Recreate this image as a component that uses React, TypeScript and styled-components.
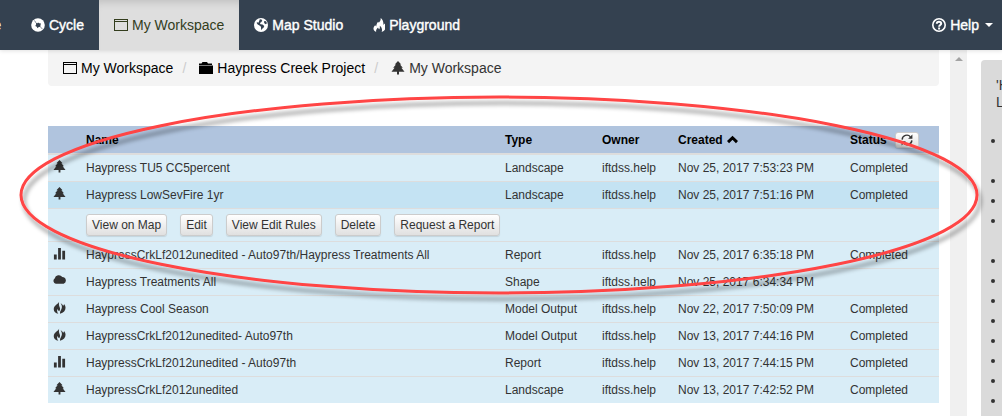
import React from "react";
import styled, { createGlobalStyle, css } from "styled-components";

const GlobalStyle = createGlobalStyle`
  *, *::before, *::after { box-sizing: border-box; }
  body {
    margin: 0;
    background: #fff;
    color: #333;
    font-family: "Liberation Sans", Arial, sans-serif;
    font-size: 14px;
    line-height: 20px;
    overflow: hidden;
  }
`;

type IconName =
  | "window" | "folder" | "tree" | "cycle" | "globe" | "flame" | "help"
  | "bars" | "cloud" | "fire" | "refresh" | "chevron";

const shapes: Record<IconName, React.ReactNode> = {
  window: (
    <path fillRule="evenodd" d="M0 1h14v12H0zM1 4v8h12V4zM1 2v1h12V2z" />
  ),
  folder: <path d="M0 4V2.500h2.500L3.500 1H8l1 1.500h4V4zM0 4.500h14V13H0z" />,
  tree: (
    <path d="M7 0l3.300 3.500H9L11.800 6.700H10.400L13.500 10.700H8V13.500H6v-2.800H.5l3.100-4H2.200L5 3.500H3.700z" />
  ),
  cycle: (
    <>
      <circle cx="7" cy="7" r="6.800" />
      <path fill="#344150" d="M7 4.500l1.300.7 1.700.2-.6 1.800.2 1.600-1.800.3-1.300 1.100-.7-1.400L4.300 8l.8-1.400L5 5l1.500.3z" />
      <path stroke="#344150" strokeWidth=".6" fill="none" d="M5 4.900L3.500 2.500M9.500 9l2 2.200" />
    </>
  ),
  globe: (
    <>
      <circle cx="7" cy="7" r="7" />
      <path fill="#344150" d="M5.800 1.200l1.700.3.8 1.200-1.200 1.500-1.200.8.6 1.300 2 .2 1.800 1.600-.8 1.700-1.300 1-.6 1.500-.6-1.900V8.800L5.500 7.400 3.700 6.600 2.500 4.800l1.200-.5.8.5.6-1.500zM10.200 3l1.800.3 1 2-1.400 1-1.500-1.400z" />
    </>
  ),
  flame: (
    <path d="M7.600 0c.4 2.300-.6 3.300-1.700 4.700L5.100 3.800C3.900 5.200 3.200 7 3.300 8.600L2.200 7.200C-.3 9.500-.2 12.700 3.200 14c-.5-2 .5-3.200 1.900-4.600.2 1 .6 1.400 1.200 1.800.7-1.200.7-2.200.4-3.400 1.900 1.300 3 3.900 1.900 6.200 4.200-1.300 5.300-5.200 3.100-8.600-.3.700-.8 1.100-1.400 1.400C10.700 4.400 9.900 1.500 7.600 0z" />
  ),
  help: (
    <>
      <circle cx="7" cy="7" r="6.200" fill="none" stroke="currentColor" strokeWidth="1.600" />
      <path fill="none" stroke="currentColor" strokeWidth="2" d="M4.800 5.700c0-2.700 4.400-2.600 4.400-.1C9.200 7 7.100 7 7.100 8.700" />
      <path d="M6.100 9.500h2v2h-2z" />
    </>
  ),
  bars: <path d="M1 8h3v5.500H1zM5.500 1h3v12.500h-3zM10 4h3v9.500h-3z" />,
  cloud: (
    <path d="M3 10.500A3.200 3.200 0 0 1 1.800 4.800 4.600 4.600 0 0 1 10 3.200 3.800 3.800 0 0 1 11.500 10.500z" />
  ),
  fire: (
    <>
      <path d="M6.800 0C6.800 2.800.8 4.600.8 8.800c0 2.600 2 4.300 5 4.900C4 11.500 4.200 9.800 5 8.500c.3 1.200.9 2 1.700 2.500C9.600 7.600 4.900 6.200 6.800 0z" />
      <path d="M8.200 2.500c2.300 3 1.400 6-.4 8.700-.3 1-.2 1.800-.2 2.500 5.800-1 7.500-6.800 4.300-10.500 0 1-.4 1.500-1 2-.5-1.200-1.500-2.200-2.700-2.700z" />
    </>
  ),
  refresh: (
    <>
      <path fill="none" stroke="currentColor" strokeWidth="1.600" d="M1.300 6.500A5.500 5.500 0 0 1 11 3.400M12.700 7.500A5.500 5.500 0 0 1 3 10.600" />
      <path d="M13.300.5v5H8.300zM.7 13.500v-5h5z" />
    </>
  ),
  chevron: (
    <path fill="none" stroke="currentColor" strokeWidth="3.800" d="M1.300 10.300L7 4.800l5.700 5.500" />
  ),
};

const Svg = styled.svg<{ $size: number; $narrow: boolean }>`
  width: ${(p) => (p.$narrow ? p.$size - 2 : p.$size)}px;
  height: ${(p) => p.$size}px;
  flex: none;
  fill: currentColor;
`;

const Icon = ({ name, size = 14 }: { name: IconName; size?: number }) => {
  const narrow = name === "flame";
  return (
    <Svg $size={size} $narrow={narrow} viewBox={narrow ? "0 0 12 14" : "0 0 14 14"} aria-hidden="true">
      {shapes[name]}
    </Svg>
  );
};

const Navbar = styled.nav`
  position: relative;
  z-index: 1;
  display: flex;
  height: 50px;
  background: #344150;
  box-shadow: 0 1px 4px rgba(0, 0, 0, 0.12);
`;

const NavLink = styled.a<{ $active?: boolean }>`
  display: flex;
  align-items: center;
  gap: 4px;
  padding: 0 15px;
  color: #fff;
  text-decoration: none;
  white-space: nowrap;
  -webkit-text-stroke: 0.4px currentColor;
  ${(p) =>
    p.$active &&
    css`
      color: #333d1d;
      background: #dedede;
      box-shadow: inset 0 8px 9px -6px rgba(0, 0, 0, 0.15);
      -webkit-text-stroke: 0;
    `}
`;

const ClippedLink = styled(NavLink)`
  width: 16px;
  padding: 0 15px 0 0;
  justify-content: flex-end;
  overflow: hidden;
`;

const NavEnd = styled.div`
  display: flex;
  margin-left: auto;
  margin-right: -6px;
`;

const Caret = styled.span`
  margin-left: 2px;
  border: 4px solid transparent;
  border-top-color: currentColor;
  border-bottom: 0;
`;

const Body = styled.div`
  display: flex;
  align-items: stretch;
  min-height: calc(100vh - 50px);
`;

const Main = styled.main`
  flex: 1;
  min-width: 0;
  padding: 0 11px 12px 48px;
`;

const Breadcrumb = styled.ol`
  display: flex;
  align-items: center;
  height: 36px;
  margin: 0 0 40px;
  padding: 0 15px;
  list-style: none;
  background: #f4f4f4;
  border-radius: 0 0 4px 4px;
`;

const Crumb = styled.li`
  display: flex;
  align-items: center;
  gap: 4px;
  & + &::before {
    content: "/";
    width: 22px;
    text-align: center;
    color: #ccc;
  }
`;

const CrumbLink = styled.a<{ $current?: boolean }>`
  display: flex;
  align-items: center;
  gap: 4px;
  color: ${(p) => (p.$current ? "#333" : "#000")};
  text-decoration: none;
`;

const Table = styled.table`
  width: 100%;
  table-layout: fixed;
  border-spacing: 0;
  font-size: 12px;
  line-height: 16px;
  tbody > tr + tr > td {
    border-top: 1px solid #ddd;
  }
`;

const Col = styled.col<{ $w?: number }>`
  width: ${(p) => (p.$w ? `${p.$w}px` : "auto")};
`;

const Th = styled.th`
  height: 29px;
  padding: 0 5px;
  text-align: left;
  color: #000;
  background: #b0c4de;
  border-bottom: 2px solid #ddd;
  white-space: nowrap;
`;

const Heading = styled.span`
  display: flex;
  align-items: center;
  gap: 4px;
`;

const StatusHeading = styled(Heading)`
  gap: 8px;
`;

const Row = styled.tr<{ $selected?: boolean }>`
  background: ${(p) => (p.$selected ? "#c4e3f3" : "#d9edf7")};
`;

const Td = styled.td`
  padding: 5px;
  white-space: nowrap;
`;

const IconCell = styled(Td)`
  vertical-align: top;
  & > svg {
    display: block;
  }
`;

const Actions = styled.div`
  display: flex;
  gap: 13px;
`;

const Button = styled.button`
  height: 22px;
  padding: 0 5px;
  font: inherit;
  color: #333;
  background: linear-gradient(#fff, #e0e0e0);
  border: 1px solid #ccc;
  border-radius: 3px;
  box-shadow: 0 1px 1px rgba(0, 0, 0, 0.1);
`;

const RefreshButton = styled(Button)`
  display: flex;
  align-items: center;
  height: 16px;
`;

const ScrollTrack = styled.div`
  flex: none;
  display: flex;
  justify-content: center;
  align-items: flex-start;
  width: 17px;
  padding-top: 7px;
  background: #f0f0f0;
`;

const ScrollArrow = styled.span`
  border: 4px solid transparent;
  border-top: 0;
  border-bottom-color: #a3a3a3;
`;

const HelpPanel = styled.aside`
  flex: none;
  width: 21px;
  margin: 10px 0 0 14px;
  padding: 17px 0 0 15px;
  overflow: hidden;
  background: #dadada;
  border-radius: 4px 0 0 0;
`;

const HelpText = styled.p`
  margin: 0 0 20px;
  line-height: 17px;
`;

const HelpList = styled.ul`
  margin: 0;
  padding: 0;
  list-style: none;
`;

const Bullet = styled.li<{ $tall?: boolean }>`
  height: ${(p) => (p.$tall ? 40 : 20)}px;
  padding: 8px 0 0 7px;
  margin-left: -12px;
  &:last-child {
    height: 12px;
  }
  &::before {
    content: "";
    display: block;
    width: 4px;
    height: 4px;
    border-radius: 50%;
    background: #333;
  }
`;

const Callout = styled.svg`
  position: absolute;
  z-index: 2;
  top: 84px;
  left: 8px;
  width: calc(100% - 16px);
  height: 226px;
  pointer-events: none;
  overflow: visible;
`;

const Page = styled.div`
  position: relative;
`;

interface Item {
  icon: IconName;
  name: string;
  type: string;
  created: string;
  status: string;
  selected?: boolean;
}

const items: Item[] = [
  { icon: "tree", name: "Haypress TU5 CC5percent", type: "Landscape", created: "Nov 25, 2017 7:53:23 PM", status: "Completed" },
  { icon: "tree", name: "Haypress LowSevFire 1yr", type: "Landscape", created: "Nov 25, 2017 7:51:16 PM", status: "Completed", selected: true },
  { icon: "bars", name: "HaypressCrkLf2012unedited - Auto97th/Haypress Treatments All", type: "Report", created: "Nov 25, 2017 6:35:18 PM", status: "Completed" },
  { icon: "cloud", name: "Haypress Treatments All", type: "Shape", created: "Nov 25, 2017 6:34:34 PM", status: "" },
  { icon: "fire", name: "Haypress Cool Season", type: "Model Output", created: "Nov 22, 2017 7:50:09 PM", status: "Completed" },
  { icon: "fire", name: "HaypressCrkLf2012unedited- Auto97th", type: "Model Output", created: "Nov 13, 2017 7:44:16 PM", status: "Completed" },
  { icon: "bars", name: "HaypressCrkLf2012unedited - Auto97th", type: "Report", created: "Nov 13, 2017 7:44:15 PM", status: "Completed" },
  { icon: "tree", name: "HaypressCrkLf2012unedited", type: "Landscape", created: "Nov 13, 2017 7:42:52 PM", status: "Completed" },
];

const actions = ["View on Map", "Edit", "View Edit Rules", "Delete", "Request a Report"];
const bullets = [true, false, false, true, false, false, false, false, false, false, false, false];

export default function App() {
  return (
    <Page>
      <GlobalStyle />
      <Navbar>
        <ClippedLink href="#home">e</ClippedLink>
        <NavLink href="#cycle"><Icon name="cycle" />Cycle</NavLink>
        <NavLink href="#workspace" $active><Icon name="window" />My Workspace</NavLink>
        <NavLink href="#map"><Icon name="globe" />Map Studio</NavLink>
        <NavLink href="#playground"><Icon name="flame" />Playground</NavLink>
        <NavEnd>
          <NavLink href="#help"><Icon name="help" />Help<Caret /></NavLink>
        </NavEnd>
      </Navbar>
      <Body>
        <Main>
          <Breadcrumb>
            <Crumb><CrumbLink href="#workspace"><Icon name="window" />My Workspace</CrumbLink></Crumb>
            <Crumb><CrumbLink href="#project"><Icon name="folder" />Haypress Creek Project</CrumbLink></Crumb>
            <Crumb><CrumbLink href="#current" $current><Icon name="tree" />My Workspace</CrumbLink></Crumb>
          </Breadcrumb>
          <Table>
            <colgroup>
              <Col $w={33} /><Col /><Col $w={97} /><Col $w={76} /><Col $w={172} /><Col $w={94} />
            </colgroup>
            <thead>
              <tr>
                <Th />
                <Th>Name</Th>
                <Th>Type</Th>
                <Th>Owner</Th>
                <Th><Heading>Created<Icon name="chevron" size={11} /></Heading></Th>
                <Th>
                  <StatusHeading>
                    Status
                    <RefreshButton aria-label="Refresh status"><Icon name="refresh" size={12} /></RefreshButton>
                  </StatusHeading>
                </Th>
              </tr>
            </thead>
            <tbody>
              {items.map((it) => (
                <React.Fragment key={it.created}>
                  <Row $selected={it.selected}>
                    <IconCell><Icon name={it.icon} size={13} /></IconCell>
                    <Td>{it.name}</Td>
                    <Td>{it.type}</Td>
                    <Td>iftdss.help</Td>
                    <Td>{it.created}</Td>
                    <Td>{it.status}</Td>
                  </Row>
                  {it.selected && (
                    <Row>
                      <Td />
                      <Td colSpan={5}>
                        <Actions>{actions.map((a) => <Button key={a}>{a}</Button>)}</Actions>
                      </Td>
                    </Row>
                  )}
                </React.Fragment>
              ))}
            </tbody>
          </Table>
        </Main>
        <ScrollTrack><ScrollArrow /></ScrollTrack>
        <HelpPanel>
          <HelpText>'H<br />L</HelpText>
          <HelpList>{bullets.map((tall, i) => <Bullet key={i} $tall={tall} />)}</HelpList>
        </HelpPanel>
      </Body>
      <Callout viewBox="8 84 986 226" preserveAspectRatio="none" aria-hidden="true">
        <defs>
          <filter id="shade" x="-5%" y="-10%" width="110%" height="125%">
            <feDropShadow dx="3" dy="6" stdDeviation="2" floodColor="#000" floodOpacity="0.4" />
          </filter>
        </defs>
        <ellipse cx="499" cy="195" rx="478" ry="98" fill="none" stroke="#ff4444" strokeWidth="3" filter="url(#shade)" />
      </Callout>
    </Page>
  );
}
